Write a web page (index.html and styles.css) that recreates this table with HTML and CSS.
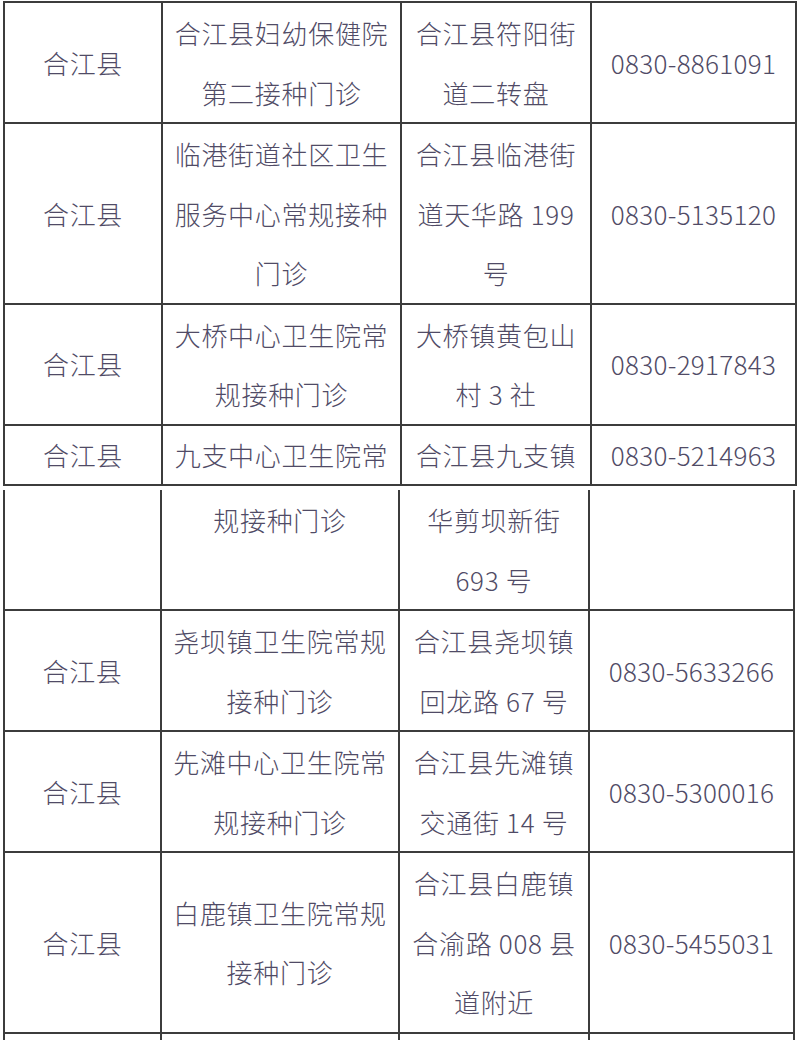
FILE: index.html
```html
<!DOCTYPE html>
<html lang="zh-CN">
<head>
<meta charset="utf-8">
<title>接种门诊</title>
<link rel="stylesheet" href="styles.css">
</head>
<body>
<table class="grid grid-first">
  <colgroup>
    <col class="c1"><col class="c2"><col class="c3"><col class="c4">
  </colgroup>
  <tr>
    <td>合江县</td>
    <td>合江县妇幼保健院<br>第二接种门诊</td>
    <td>合江县符阳街<br>道二转盘</td>
    <td class="tel">0830-8861091</td>
  </tr>
  <tr>
    <td>合江县</td>
    <td>临港街道社区卫生<br>服务中心常规接种<br>门诊</td>
    <td>合江县临港街<br>道天华路 199<br>号</td>
    <td class="tel">0830-5135120</td>
  </tr>
  <tr>
    <td>合江县</td>
    <td>大桥中心卫生院常<br>规接种门诊</td>
    <td>大桥镇黄包山<br>村 3 社</td>
    <td class="tel">0830-2917843</td>
  </tr>
  <tr class="split">
    <td>合江县</td>
    <td>九支中心卫生院常</td>
    <td>合江县九支镇</td>
    <td class="tel">0830-5214963</td>
  </tr>
</table>
<table class="grid grid-second">
  <colgroup>
    <col class="d1"><col class="d2"><col class="d3"><col class="d4">
  </colgroup>
  <tr>
    <td></td>
    <td>规接种门诊<br>&nbsp;</td>
    <td>华剪坝新街<br>693 号</td>
    <td class="tel"></td>
  </tr>
  <tr>
    <td>合江县</td>
    <td>尧坝镇卫生院常规<br>接种门诊</td>
    <td>合江县尧坝镇<br>回龙路 67 号</td>
    <td class="tel">0830-5633266</td>
  </tr>
  <tr>
    <td>合江县</td>
    <td>先滩中心卫生院常<br>规接种门诊</td>
    <td>合江县先滩镇<br>交通街 14 号</td>
    <td class="tel">0830-5300016</td>
  </tr>
  <tr>
    <td>合江县</td>
    <td>白鹿镇卫生院常规<br>接种门诊</td>
    <td>合江县白鹿镇<br>合渝路 008 县<br>道附近</td>
    <td class="tel">0830-5455031</td>
  </tr>
  <tr class="tail">
    <td></td>
    <td></td>
    <td></td>
    <td class="tel"></td>
  </tr>
</table>
</body>
</html>
```

FILE: styles.css
```css
html, body {
  margin: 0;
  padding: 0;
  background: #ffffff;
}

body {
  font-family: "Noto Sans CJK SC", "Noto Sans", sans-serif;
  font-size: 26px;
  font-weight: 300;
  color: #504b66;
}

.grid {
  border-collapse: separate;
  border-spacing: 0;
  table-layout: fixed;
  margin-left: 3px;
}

.grid-first {
  width: 794px;
  margin-top: 1px;
}

.grid-second {
  width: 792px;
  margin-top: 4px;
}

.c1 { width: 160px; }
.c2 { width: 239px; }
.c3 { width: 190px; }
.c4 { width: 205px; }

.d1 { width: 159px; }
.d2 { width: 238px; }
.d3 { width: 190px; }
.d4 { width: 205px; }

.grid td {
  padding: 0;
  text-align: center;
  vertical-align: middle;
  line-height: 59.5px;
  letter-spacing: 0.7px;
  white-space: nowrap;
  border-right: 2px solid #3c3c3c;
  border-bottom: 2px solid #3c3c3c;
}

.grid td:first-child {
  border-left: 2px solid #3c3c3c;
}

.grid-first tr:first-child td {
  border-top: 2px solid #3c3c3c;
}

.grid .split td {
  line-height: 58.5px;
}

.grid td.tel {
  letter-spacing: 0.3px;
}

.grid .tail td {
  height: 6px;
  line-height: 6px;
  font-size: 0;
  border-bottom: none;
}
```
